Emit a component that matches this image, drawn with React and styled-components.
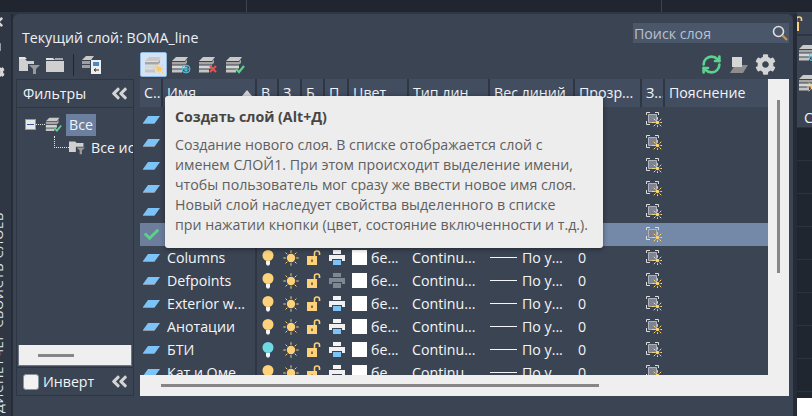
import React from 'react'
import styled, {createGlobalStyle} from 'styled-components'
import {FaCog, FaAngleDoubleLeft, FaTimes, FaCheck, FaCaretLeft} from 'react-icons/fa'
import {RefreshCw} from 'lucide-react'

const GlobalStyle = createGlobalStyle`
  html, body { margin: 0; padding: 0; background: #2b3240; }
  body { font-family: "Open Sans", "Liberation Sans", sans-serif; }
`

const COLUMNS = '23px 94px 22px 23px 23px 24px 60px 81px 85px 67px 23px 103px'

const Screen = styled.div`
  width: 812px;
  height: 416px;
  overflow: hidden;
  display: flex;
  flex-direction: column;
  background: #2b3240;
`
const TopBar = styled.div`
  height: 12px;
  flex: none;
  display: flex;
  background: #20252f;
  border-bottom: 2px solid #2f3643;
`
const TopSegment = styled.div`
  width: ${p => p.$w}px;
  border-right: 1px solid #3b4453;
`
const Main = styled.div`
  flex: 1;
  min-height: 0;
  display: flex;
`
const LeftStrip = styled.div`
  width: 11px;
  flex: none;
  overflow: hidden;
  display: flex;
  flex-direction: column;
  background: #2f3644;
  border-right: 2px solid #262c37;
  color: #d8d8d8;
`
const StripIcons = styled.div`
  margin: 1px 0 0 -9px;
  display: flex;
  flex-direction: column;
  gap: 11px;
  font-size: 14px;
  svg { display: block; }
`
const StripText = styled.div`
  margin: auto 0 3px -9px;
  writing-mode: vertical-rl;
  transform: rotate(180deg);
  font-size: 13px;
  line-height: 15px;
  letter-spacing: 0.7px;
  white-space: nowrap;
  color: #dfe4ec;
`
const Palette = styled.div`
  width: 780px;
  flex: none;
  padding: 9px 4px 0 3px;
  box-sizing: border-box;
  background: #3b4453;
  border-radius: 6px 6px 0 0;
  position: relative;
  color: #f1f4f8;
`
const HeaderRow = styled.div`
  height: 20px;
  display: flex;
  align-items: flex-end;
  justify-content: space-between;
  padding-left: 6px;
`
const Title = styled.div`
  font-size: 14.2px;
  line-height: 19px;
  margin-bottom: -4px;
  color: #eef1f5;
`
const SearchBox = styled.div`
  width: 156px;
  height: 20px;
  display: flex;
  align-items: center;
  justify-content: space-between;
  padding: 0 1px;
  box-sizing: border-box;
  background: #4a566a;
  font-size: 14.2px;
  color: #b9c2cf;
`
const Toolbar = styled.div`
  margin-top: 9px;
  height: 25px;
  display: flex;
  align-items: center;
  padding-left: 3px;
`
const ToolDivider = styled.div`
  width: 1px;
  height: 22px;
  margin: 0 7px 0 9px;
  background: #20252f;
`
const ToolGroup = styled.div`
  display: flex;
  align-items: center;
  gap: ${p => p.$gap || 0}px;
  margin-left: ${p => p.$left || 0}px;
`
const HotButton = styled.div`
  width: 27px;
  height: 25px;
  box-sizing: border-box;
  display: flex;
  align-items: center;
  justify-content: center;
  background: #d3e3f4;
  border: 1px solid #8fb8e2;
  border-radius: 2px;
`
const Body = styled.div`
  margin-top: 2px;
  height: 317px;
  display: flex;
  gap: 6px;
`
const FilterPanel = styled.div`
  width: 118px;
  box-sizing: border-box;
  display: flex;
  flex-direction: column;
  border: 1px solid #2f3643;
`
const FilterHead = styled.div`
  height: 27px;
  flex: none;
  display: flex;
  align-items: center;
  justify-content: space-between;
  padding: 0 4px 0 6px;
  font-size: 14.2px;
  border-bottom: 1px solid #2f3643;
  svg { color: #d4d4d4; font-size: 19px; }
`
const Tree = styled.div`
  flex: 1;
  min-height: 0;
  overflow: hidden;
  padding-top: 5px;
`
const TreeRow = styled.div`
  height: 23px;
  display: flex;
  align-items: center;
  padding-left: ${p => p.$indent}px;
  font-size: 14.2px;
  white-space: nowrap;
  svg { flex: none; }
`
const MinusBox = styled.div`
  width: 11px;
  height: 11px;
  flex: none;
  box-sizing: border-box;
  display: flex;
  align-items: center;
  justify-content: center;
  background: #e8e8e8;
  border: 1px solid #999;
  &::after { content: ''; width: 7px; height: 1px; background: #3a55a0; }
`
const DotsH = styled.div`
  width: ${p => p.$w}px;
  flex: none;
  border-top: 1px dotted #e6e6e6;
`
const DotsCorner = styled.div`
  width: 15px;
  height: 12px;
  flex: none;
  margin-top: -12px;
  box-sizing: border-box;
  border-left: 1px dotted #e6e6e6;
  border-bottom: 1px dotted #e6e6e6;
`
const TreeLabel = styled.div`
  height: 22px;
  line-height: 22px;
  padding: 0 3px;
  margin-left: ${p => p.$left || 0}px;
  background: ${p => (p.$active ? '#6d7f9f' : 'transparent')};
`
const FilterScroll = styled.div`
  height: 20px;
  flex: none;
  margin: 0 1px;
  padding-left: 19px;
  display: flex;
  align-items: center;
  background: #efefef;
  border: 1px solid #6d7686;
  border-top: none;
`
const ThumbH = styled.div`
  width: ${p => p.$w}px;
  height: 3px;
  background: #868686;
`
const FilterFoot = styled.div`
  height: 27px;
  flex: none;
  margin-top: 1px;
  display: flex;
  align-items: center;
  padding: 0 4px 0 6px;
  font-size: 14.2px;
  border-top: 1px solid #2f3643;
  svg { color: #d4d4d4; font-size: 19px; margin-left: auto; }
`
const CheckBox = styled.div`
  width: 14px;
  height: 14px;
  margin-right: 4px;
  background: #f2f2f2;
  border: 1px solid #8b93a0;
  border-radius: 3px;
`
const TableWrap = styled.div`
  width: 649px;
  display: flex;
  flex-direction: column;
`
const TableTop = styled.div`
  height: 296px;
  display: flex;
`
const Table = styled.div`
  width: 628px;
  display: flex;
  flex-direction: column;
`
const TableHead = styled.div`
  height: 28px;
  flex: none;
  display: grid;
  grid-template-columns: ${COLUMNS};
  background: #434d60;
  border-bottom: 1px solid #3b4453;
`
const HeadCell = styled.div`
  position: relative;
  padding-left: 4px;
  font-size: 14.2px;
  line-height: 27px;
  white-space: nowrap;
  overflow: hidden;
  box-sizing: border-box;
  border-right: 2px solid #2f3643;
  &:last-child { border-right: none; }
`
const SortCaret = styled.span`
  position: absolute;
  right: 3px;
  top: 11px;
  border: 5px solid transparent;
  border-top: none;
  border-bottom: 6px solid #d4d4d4;
`
const Rows = styled.div`
  flex: 1;
  min-height: 0;
  overflow: hidden;
`
const Row = styled.div`
  height: 23px;
  display: grid;
  grid-template-columns: ${COLUMNS};
  align-items: center;
  background: ${p => (p.$selected ? '#7488a8' : 'transparent')};
  font-size: 14.2px;
  color: #f4f6f9;
`
const StatusCell = styled.div`
  height: 23px;
  display: flex;
  align-items: center;
  justify-content: center;
  background: ${p => (p.$selected ? '#6c7e9c' : 'transparent')};
  color: #5fd08c;
  font-size: 15px;
`
const NameCell = styled.div`
  height: 23px;
  line-height: 23px;
  padding-left: 4px;
  box-sizing: border-box;
  white-space: nowrap;
  overflow: hidden;
  border-right: 2px solid #2f3643;
`
const IconCell = styled.div`
  display: flex;
  align-items: center;
  justify-content: center;
`
const ColorCell = styled.div`
  display: flex;
  align-items: center;
  gap: 4px;
  padding-left: 3px;
`
const Swatch = styled.div`
  width: 15px;
  height: 15px;
  flex: none;
  background: #fff;
`
const TextCell = styled.div`
  padding-left: ${p => p.$left || 3}px;
  white-space: nowrap;
`
const WeightCell = styled.div`
  display: flex;
  align-items: center;
  gap: 5px;
  white-space: nowrap;
`
const WeightLine = styled.div`
  width: 27px;
  height: 1px;
  flex: none;
  background: #f4f6f9;
`
const ScrollV = styled.div`
  width: 21px;
  flex: none;
  padding-top: 21px;
  box-sizing: border-box;
  display: flex;
  justify-content: center;
  background: #efefef;
`
const ThumbV = styled.div`
  width: 3px;
  height: 173px;
  background: #868686;
`
const ScrollH = styled.div`
  height: 21px;
  padding-left: 21px;
  display: flex;
  align-items: center;
  background: #efefef;
`
const Tooltip = styled.div`
  position: absolute;
  left: 152px;
  top: 82px;
  width: 438px;
  height: 152px;
  padding: 11px 10px 0;
  box-sizing: border-box;
  background: #ededed;
  border-radius: 3px;
  box-shadow: 0 1px 5px rgba(0, 0, 0, 0.45);
  color: #5f5f5f;
  font-size: 14.2px;
  line-height: 20px;
  white-space: nowrap;
`
const TooltipTitle = styled.div`
  font-weight: 700;
  color: #464646;
  margin-bottom: 8px;
`
const Gutter = styled.div`
  width: 4px;
  flex: none;
  background: #262c37;
`
const RightRail = styled.div`
  flex: 1;
  min-width: 0;
  overflow: hidden;
  display: flex;
  flex-direction: column;
  margin-top: -2px;
  background: #20262f;
`
const RailPanel = styled.div`
  height: 115px;
  flex: none;
  background: #3b4453;
  display: flex;
  flex-direction: column;
  color: #f1f4f8;
  font-size: 14.2px;
  line-height: 18px;
`
const RailLock = styled.div`
  height: 24px;
  padding-top: 4px;
  box-sizing: border-box;
  border-bottom: 2px solid #2f3643;
  margin-bottom: 8px;
  svg { display: block; margin-left: -8px; }
`
const RailIcon = styled.div`
  height: 30px;
  padding-left: 1px;
  svg { display: block; }
`
const RailText = styled.div`
  padding-left: 7px;
  margin-top: 5px;
`
const RailGrid = styled.div`
  flex: 1;
  background-image: linear-gradient(#2c3340 1px, transparent 1px);
  background-size: 100% 33px;
`
const RailBlank = styled.div`
  height: 18px;
  flex: none;
  background: #fff;
`

const SunMark = ({cx, cy, r, color}) => {
  const rays = [0, 45, 90, 135, 180, 225, 270, 315]
  return (
    <g>
      <circle cx={cx} cy={cy} r={r} fill={color} />
      {rays.map(a => {
        const t = (a * Math.PI) / 180
        return (
          <line
            key={a}
            x1={cx + Math.cos(t) * (r + 1)}
            y1={cy + Math.sin(t) * (r + 1)}
            x2={cx + Math.cos(t) * (r + 3.5)}
            y2={cy + Math.sin(t) * (r + 3.5)}
            stroke={color}
            strokeWidth="1"
          />
        )
      })}
    </g>
  )
}

// layer stack drawing with a small badge in the corner
const LayerStack = ({badge, size = 20}) => (
  <svg width={size} height={size * 0.9} viewBox="0 0 20 18">
    <path d="M5 1h12l-3 4H1z" fill="#c9c9c9" />
    <path d="M1 6h13l2-2.500V7l-2 1.500H1z" fill="#a5a5a5" />
    <path d="M1 9.500h13v3H1z" fill="#d6d6d6" />
    <path d="M1 13.500h10v3H1z" fill="#c4c4c4" />
    {badge === 'sun' && <SunMark cx={15} cy={13} r={2.6} color="#ffc861" />}
    {badge === 'globe' && (
      <g fill="none" stroke="#58c0d8" strokeWidth="1">
        <circle cx="15" cy="13" r="4" />
        <path d="M11 13h8M15 9v8M12.500 10.500c2 1.500 3 1.500 5 0M12.500 15.500c2-1.500 3-1.500 5 0" />
      </g>
    )}
    {badge === 'x' && <path d="M12 10l6 6M18 10l-6 6" stroke="#e5514e" strokeWidth="2.200" />}
    {badge === 'check' && <path d="M11 13l3 3 5-6" fill="none" stroke="#5fd08c" strokeWidth="2.200" />}
  </svg>
)

const FolderFilter = () => (
  <svg width="21" height="18" viewBox="0 0 21 18">
    <path d="M0 3h6l2 2h7v3H9v7H0z" fill="#d0d0d0" />
    <path d="M0 1h6l2 2H0z" fill="#e6e6e6" />
    <path d="M10 9h11l-4 4v5h-3v-5z" fill="#9a9a9a" />
  </svg>
)
const Folder = () => (
  <svg width="18" height="15" viewBox="0 0 18 15">
    <path d="M0 1h7l2 2H0z" fill="#e0e0e0" />
    <path d="M0 4h18v11H0z" fill="#cfcfcf" />
    <path d="M9 1h8v2H9z" fill="#a8a8a8" />
  </svg>
)
const FilterFolder = () => (
  <svg width="16" height="15" viewBox="0 0 21 18">
    <path d="M0 1h8l2 2h9v5H9v7H0z" fill="#d0d0d0" />
    <path d="M10 9h11l-4 4v5h-3v-5z" fill="#9a9a9a" />
  </svg>
)
const StateManager = () => (
  <svg width="20" height="19" viewBox="0 0 20 19">
    <path d="M5 1h8l-3 4H1z" fill="#c9c9c9" />
    <path d="M1 6h8v3H1zM1 10h8v3H1z" fill="#9f9f9f" />
    <path d="M10 5h10v14H10z" fill="#eee" />
    <path d="M12 7h6v4h-6z" fill="#4b89c4" />
    <path d="M13 15h5M13 15l2-1.500M13 15l2 1.500" stroke="#333" fill="none" />
  </svg>
)
const LayerCopy = () => (
  <svg width="19" height="18" viewBox="0 0 19 18">
    <path d="M6 9h13l-5 8H1z" fill="#8d8d8d" />
    <path d="M3 1h10v10H3z" fill="#d6d6d6" />
  </svg>
)
const Magnifier = () => (
  <svg width="16" height="16" viewBox="0 0 16 16">
    <circle cx="6.500" cy="6.500" r="5" fill="none" stroke="#e0e0e0" strokeWidth="1.600" />
    <path d="M10.500 10.500L15 15" stroke="#c89a5a" strokeWidth="2" />
  </svg>
)
const LayerFlat = () => (
  <svg width="17" height="8" viewBox="0 0 17 8">
    <path d="M5 0h12l-5 7H0z" fill="#7cc4f8" />
    <path d="M0 7h12l-.700 1H0z" fill="#8d97a6" />
  </svg>
)
const Bulb = ({color}) => (
  <svg width="12" height="16" viewBox="0 0 12 16">
    <circle cx="6" cy="5.500" r="5.500" fill={color} />
    <path d="M4 11h4v3l-1 1.500H5L4 14z" fill="#f4f4f4" />
  </svg>
)
const Sun = () => (
  <svg width="16" height="16" viewBox="0 0 16 16">
    <SunMark cx={8} cy={8} r={4.2} color="#fdd27b" />
  </svg>
)
const Lock = () => (
  <svg width="14" height="15" viewBox="0 0 14 15">
    <path d="M0 6h10v9H0z" fill="#fdd27b" />
    <path d="M7.500 6V3.200C7.500 1.800 8.700 1 10 1s2.500.800 2.500 2.200V5" fill="none" stroke="#fdd27b" strokeWidth="1.600" />
    <path d="M4 9.500h2v2.500H4z" fill="#8a6d32" />
  </svg>
)
const Printer = ({off}) => (
  <svg width="16" height="15" viewBox="0 0 16 15">
    <path d="M4 0h8v4H4z" fill={off ? '#7f8793' : '#f4f4f4'} />
    <path d="M0 5h16v6h-3V9H3v2H0z" fill={off ? '#7f8793' : '#f0f0f0'} />
    <path d="M4 10h8v5H4z" fill={off ? '#7f8793' : '#7cc4f8'} />
  </svg>
)
const FreezeIcon = () => (
  <svg width="16" height="15" viewBox="0 0 16 15">
    <path d="M.5 3V.5H4M9 .5h3.500V3M.5 9v3.500H4" fill="none" stroke="#dcdcdc" strokeWidth="1" />
    <path d="M2.500 2.500h8v8h-8z" fill="#7d8391" stroke="#aeb2ba" strokeWidth="1" />
    <SunMark cx={11.500} cy={10.500} r={1.800} color="#ffd66b" />
  </svg>
)

const layers = [
  {name: ''},
  {name: ''},
  {name: ''},
  {name: ''},
  {name: ''},
  {name: 'BOMA_line', selected: true},
  {name: 'Columns'},
  {name: 'Defpoints', noPlot: true},
  {name: 'Exterior w...'},
  {name: 'Анотации'},
  {name: 'БТИ', bulb: '#6fd9e4'},
  {name: 'Кат и Оме'},
]

const heads = ['С...', 'Имя', 'В', 'З', 'Б', 'П', 'Цвет', 'Тип лин...', 'Вес линий', 'Прозр...', 'З...', 'Пояснение']

const App = () => {
  return (
    <Screen>
      <GlobalStyle />
      <TopBar>
        <TopSegment $w={246} />
        <TopSegment $w={414} />
      </TopBar>
      <Main>
        <LeftStrip>
          <StripIcons>
            <FaTimes />
            <FaCaretLeft />
            <FaCog />
          </StripIcons>
          <StripText>ДИСПЕТЧЕР СВОЙСТВ СЛОЕВ</StripText>
        </LeftStrip>
        <Palette>
          <HeaderRow>
            <Title>Текущий слой: BOMA_line</Title>
            <SearchBox>
              Поиск слоя
              <Magnifier />
            </SearchBox>
          </HeaderRow>
          <Toolbar>
            <FolderFilter />
            <ToolGroup $left={6}><Folder /></ToolGroup>
            <ToolDivider />
            <StateManager />
            <ToolGroup $left={39}>
              <HotButton><LayerStack badge="sun" /></HotButton>
            </ToolGroup>
            <ToolGroup $left={4} $gap={7}>
              <LayerStack badge="globe" />
              <LayerStack badge="x" />
              <LayerStack badge="check" />
            </ToolGroup>
            <ToolGroup $left={456} $gap={7}>
              <RefreshCw size={21} color="#5bd38f" strokeWidth={3} />
              <LayerCopy />
              <FaCog size={21} color="#d4d4d4" />
            </ToolGroup>
          </Toolbar>
          <Body>
            <FilterPanel>
              <FilterHead>
                Фильтры
                <FaAngleDoubleLeft />
              </FilterHead>
              <Tree>
                <TreeRow $indent={8}>
                  <MinusBox />
                  <DotsH $w={9} />
                  <LayerStack badge="check" size={17} />
                  <TreeLabel $active $left={4}>Все</TreeLabel>
                </TreeRow>
                <TreeRow $indent={37}>
                  <DotsCorner />
                  <FilterFolder />
                  <TreeLabel $left={3}>Все используемые</TreeLabel>
                </TreeRow>
              </Tree>
              <FilterScroll><ThumbH $w={36} /></FilterScroll>
              <FilterFoot>
                <CheckBox />
                Инверт
                <FaAngleDoubleLeft />
              </FilterFoot>
            </FilterPanel>
            <TableWrap>
              <TableTop>
                <Table>
                  <TableHead>
                    {heads.map((h, i) => (
                      <HeadCell key={i}>
                        {h}
                        {h === 'Имя' && <SortCaret />}
                      </HeadCell>
                    ))}
                  </TableHead>
                  <Rows>
                    {layers.map((l, i) => (
                      <Row key={i} $selected={l.selected}>
                        <StatusCell $selected={l.selected}>
                          {l.selected ? <FaCheck /> : <LayerFlat />}
                        </StatusCell>
                        <NameCell>{l.name}</NameCell>
                        <IconCell><Bulb color={l.bulb || '#fdd27b'} /></IconCell>
                        <IconCell><Sun /></IconCell>
                        <IconCell><Lock /></IconCell>
                        <IconCell><Printer off={l.noPlot} /></IconCell>
                        <ColorCell><Swatch />бе...</ColorCell>
                        <TextCell>Continu...</TextCell>
                        <WeightCell><WeightLine />По у...</WeightCell>
                        <TextCell>0</TextCell>
                        <IconCell><FreezeIcon /></IconCell>
                        <div />
                      </Row>
                    ))}
                  </Rows>
                </Table>
                <ScrollV><ThumbV /></ScrollV>
              </TableTop>
              <ScrollH><ThumbH $w={438} /></ScrollH>
            </TableWrap>
          </Body>
          <Tooltip>
            <TooltipTitle>Создать слой (Alt+Д)</TooltipTitle>
            Создание нового слоя. В списке отображается слой с<br />
            именем СЛОЙ1. При этом происходит выделение имени,<br />
            чтобы пользователь мог сразу же ввести новое имя слоя.<br />
            Новый слой наследует свойства выделенного в списке<br />
            при нажатии кнопки (цвет, состояние включенности и т.д.).
          </Tooltip>
        </Palette>
        <Gutter />
        <RightRail>
          <RailPanel>
            <RailLock><Lock /></RailLock>
            <RailIcon><LayerStack badge="globe" /></RailIcon>
            <RailIcon><LayerStack badge="sun" /></RailIcon>
            <RailText>С</RailText>
          </RailPanel>
          <RailGrid />
          <RailBlank />
        </RightRail>
      </Main>
    </Screen>
  )
}

export default App
